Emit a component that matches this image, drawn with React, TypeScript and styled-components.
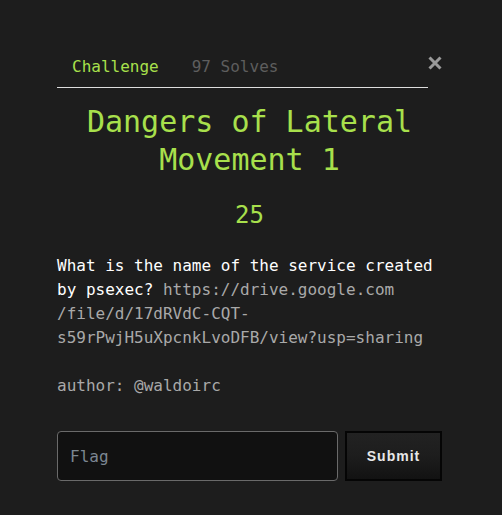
import React from "react";
import styled, { createGlobalStyle } from "styled-components";

const GlobalStyle = createGlobalStyle`
  html, body {
    margin: 0;
    padding: 0;
    background-color: #1d1d1d;
  }
  * {
    box-sizing: border-box;
  }
`;

const Page = styled.div`
  width: 502px;
  height: 515px;
  padding-left: 57px;
  background-color: #1d1d1d;
  font-family: "DejaVu Sans Mono", "Liberation Mono", monospace;
`;

const Modal = styled.div`
  width: 385px;
  padding-top: 47px;
  display: flex;
  flex-direction: column;
`;

const Header = styled.div`
  display: flex;
  align-items: flex-start;
`;

const Tabs = styled.nav`
  width: 371px;
  display: flex;
  padding-left: 15px;
  border-bottom: 1px solid #dddddd;
`;

const Tab = styled.span<{ $active?: boolean }>`
  padding: 8px 0;
  margin-right: 33px;
  font-size: 16px;
  line-height: 24px;
  color: ${props => (props.$active ? "#a8e04c" : "#5e5e5e")};
`;

const CloseButton = styled.button`
  margin-top: 9px;
  padding: 0;
  width: 14px;
  height: 14px;
  border: none;
  background: transparent;
  display: flex;
  cursor: pointer;
`;

const Title = styled.h1`
  margin: 15px 0 0;
  font-size: 30px;
  line-height: 38px;
  font-weight: 400;
  text-align: center;
  color: #a8e04c;
`;

const Points = styled.h2`
  margin: 18px 0 0;
  font-size: 24px;
  line-height: 36px;
  font-weight: 400;
  text-align: center;
  color: #a8e04c;
`;

const Description = styled.div`
  margin-top: 21px;
  font-size: 16px;
  line-height: 24px;
  color: #ffffff;
`;

const Link = styled.span`
  color: #a9a9a9;
`;

const Author = styled.p`
  margin: 24px 0 0;
  color: #a9a9a9;
`;

const Form = styled.form`
  margin-top: 33px;
  display: flex;
  gap: 7px;
`;

const FlagInput = styled.input`
  width: 281px;
  height: 50px;
  padding: 0 12px;
  background-color: #111111;
  border: 1px solid #6a6a6a;
  border-radius: 4px;
  color: #dddddd;
  font-family: "DejaVu Sans Mono", "Liberation Mono", monospace;
  font-size: 16px;
  &::placeholder {
    color: #7c8792;
  }
  &:focus {
    outline: none;
  }
`;

const SubmitButton = styled.button`
  width: 97px;
  height: 50px;
  border: 2px solid #050505;
  background: linear-gradient(#222222 0%, #1d1d1d 50%, #121212 100%);
  color: #e8e8e8;
  font-family: "Liberation Sans", Arial, sans-serif;
  font-weight: 700;
  font-size: 14px;
  letter-spacing: 1px;
  cursor: pointer;
`;

const CloseIcon = () => (
  <svg width="14" height="14" viewBox="0 0 14 14">
    <path d="M1.5 1.5 L12.5 12.5 M12.5 1.5 L1.5 12.5" stroke="#9a9a9a" strokeWidth="3" />
  </svg>
);

export default function App() {
  return (
    <>
      <GlobalStyle />
      <Page>
        <Modal>
          <Header>
            <Tabs>
              <Tab $active>Challenge</Tab>
              <Tab>97 Solves</Tab>
            </Tabs>
            <CloseButton type="button" aria-label="Close">
              <CloseIcon />
            </CloseButton>
          </Header>
          <Title>Dangers of Lateral Movement 1</Title>
          <Points>25</Points>
          <Description>
            What is the name of the service created by psexec?{" "}
            <Link>
              https://drive.google.com
              <wbr />
              /file/d/17dRVdC-CQT-
              <wbr />
              s59rPwjH5uXpcnkLvoDFB/view?usp=sharing
            </Link>
            <Author>author: @waldoirc</Author>
          </Description>
          <Form onSubmit={e => e.preventDefault()}>
            <FlagInput type="text" placeholder="Flag" />
            <SubmitButton type="submit">Submit</SubmitButton>
          </Form>
        </Modal>
      </Page>
    </>
  );
}
